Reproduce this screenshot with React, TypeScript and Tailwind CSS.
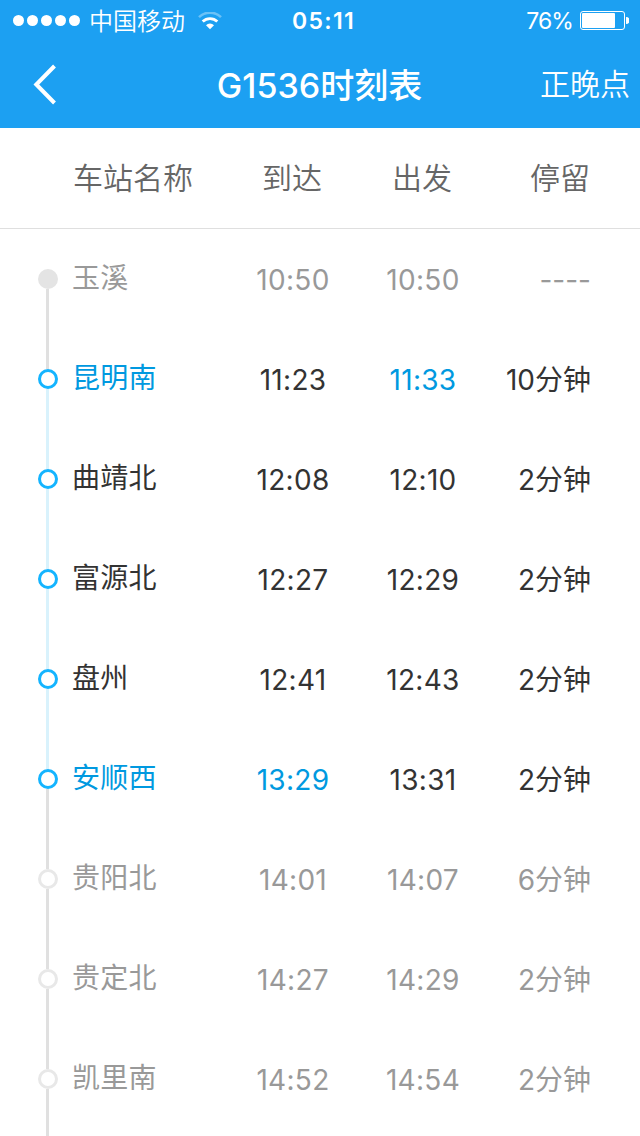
import React from "react";
import clsx from "clsx";

type Stop = {
  name: string;
  arrive: string;
  depart: string;
  stay: string;
  status: "start" | "board" | "ride" | "alight" | "after";
};

const stops: Stop[] = [
  { name: "玉溪", arrive: "10:50", depart: "10:50", stay: "----", status: "start" },
  { name: "昆明南", arrive: "11:23", depart: "11:33", stay: "10分钟", status: "board" },
  { name: "曲靖北", arrive: "12:08", depart: "12:10", stay: "2分钟", status: "ride" },
  { name: "富源北", arrive: "12:27", depart: "12:29", stay: "2分钟", status: "ride" },
  { name: "盘州", arrive: "12:41", depart: "12:43", stay: "2分钟", status: "ride" },
  { name: "安顺西", arrive: "13:29", depart: "13:31", stay: "2分钟", status: "alight" },
  { name: "贵阳北", arrive: "14:01", depart: "14:07", stay: "6分钟", status: "after" },
  { name: "贵定北", arrive: "14:27", depart: "14:29", stay: "2分钟", status: "after" },
  { name: "凯里南", arrive: "14:52", depart: "14:54", stay: "2分钟", status: "after" },
];

const StatusBar = () => {
  return (
    <div className="flex items-center h-10 pl-[13px] pr-[11px]">
      <div className="flex flex-1 items-center">
        <div className="flex gap-[3px]">
          {[0, 1, 2, 3, 4].map((i) => (
            <span key={i} className="w-[11px] h-[11px] bg-white rounded-full" />
          ))}
        </div>
        <span className="pt-1 ml-[9px] text-2xl leading-9 font-[350]">中国移动</span>
        <svg className="mt-0.5 ml-[13px]" width="24" height="18" viewBox="0 0 24 18" fill="none">
          <path d="M1 5.2a15.6 15.6 0 0 1 22 0" stroke="#fff" strokeOpacity="0.35" strokeWidth="2.6" />
          <path d="M4.7 9.6a10.4 10.4 0 0 1 14.6 0" stroke="#fff" strokeWidth="2.8" />
          <path d="M8 13.2a5.8 5.8 0 0 1 8 0L12 17.2z" fill="#fff" />
        </svg>
      </div>
      <span className="pt-0.5 pl-[5px] text-[23px] leading-9 font-semibold tracking-[1.3px]">05:11</span>
      <div className="flex flex-1 items-center justify-end">
        <span className="pt-0.5 text-[23px] leading-9 tracking-[-0.9px]">76%</span>
        <svg className="ml-[7px]" width="49" height="20" viewBox="0 0 49 20" fill="none">
          <rect x="0.5" y="1.5" width="44" height="18" rx="2.5" stroke="#fff" />
          <rect x="2" y="3" width="33" height="15" rx="1" fill="#fff" />
          <path d="M46 7a3.5 3.5 0 0 1 0 7z" fill="#fff" />
        </svg>
      </div>
    </div>
  );
};

const NavBar = () => {
  return (
    <div className="flex items-center h-[88px] pl-8 pr-2.5">
      <div className="w-[130px]">
        <svg width="26" height="44" viewBox="0 0 26 44" fill="none">
          <path d="M22.5 4L4.3 22.5L22.5 41" stroke="#fff" strokeWidth="4" />
        </svg>
      </div>
      <h1 className="flex-1 pt-1 pr-[23px] text-center text-[34px] leading-10 font-[450]">G1536时刻表</h1>
      <div className="w-[130px] text-right text-3xl font-[350]">正晚点</div>
    </div>
  );
};

const StopRow = ({ stop }: { stop: Stop }) => {
  const { status } = stop;
  const passed = status === "start" || status === "after";
  return (
    <div
      className={clsx(
        "flex items-center h-[100px] pl-[38px] text-[28px] leading-10 font-[390]",
        passed ? "text-[#999999]" : "text-[#333333]"
      )}
    >
      <div className="flex flex-col w-5 h-full">
        <span
          className={clsx(
            "w-[3px] h-10 ml-2",
            status === "board" || status === "after" ? "bg-[#e0e0e0]" : status !== "start" && "bg-[#d9f2fc]"
          )}
        />
        <span
          className={clsx(
            "w-5 h-5 rounded-full",
            status === "start" && "bg-[#e4e4e4]",
            status === "after" && "border-[3px] border-[#e8e8e8]",
            !passed && "border-[3px] border-[#14b4ff]"
          )}
        />
        <span
          className={clsx(
            "w-[3px] h-10 ml-2",
            status === "board" || status === "ride" ? "bg-[#d9f2fc]" : "bg-[#e0e0e0]"
          )}
        />
      </div>
      <span
        className={clsx(
          "w-[170px] pl-3.5 pb-0.5 tracking-[0.3px]",
          (status === "board" || status === "alight") && "text-[#0099e0]"
        )}
      >
        {stop.name}
      </span>
      <span className={clsx("w-[130px] pt-0.5 text-center tracking-[0.3px]", status === "alight" && "text-[#0099e0]")}>
        {stop.arrive}
      </span>
      <span className={clsx("w-[130px] pt-0.5 text-center tracking-[0.3px]", status === "board" && "text-[#0099e0]")}>
        {stop.depart}
      </span>
      <span className="w-[103px] pt-0.5 text-right">{stop.stay}</span>
    </div>
  );
};

const App = () => {
  return (
    <div className="w-[640px] h-[1136px] overflow-hidden bg-white font-['Inter','Noto_Sans_CJK_SC',sans-serif]">
      <header className="text-white bg-[#1ca0f2]">
        <StatusBar />
        <NavBar />
      </header>
      <div className="flex items-center h-[101px] pl-[73px] border-b border-[#dfdfdf] text-3xl font-[350] text-[#666666]">
        <span className="w-[154px]">车站名称</span>
        <span className="w-[130px] text-center">到达</span>
        <span className="w-[130px] text-center">出发</span>
        <span className="w-[103px] text-right">停留</span>
      </div>
      {stops.map((stop) => (
        <StopRow key={stop.name} stop={stop} />
      ))}
      <div className="w-[3px] h-[7px] ml-[46px] bg-[#e0e0e0]" />
    </div>
  );
};

export default App;
